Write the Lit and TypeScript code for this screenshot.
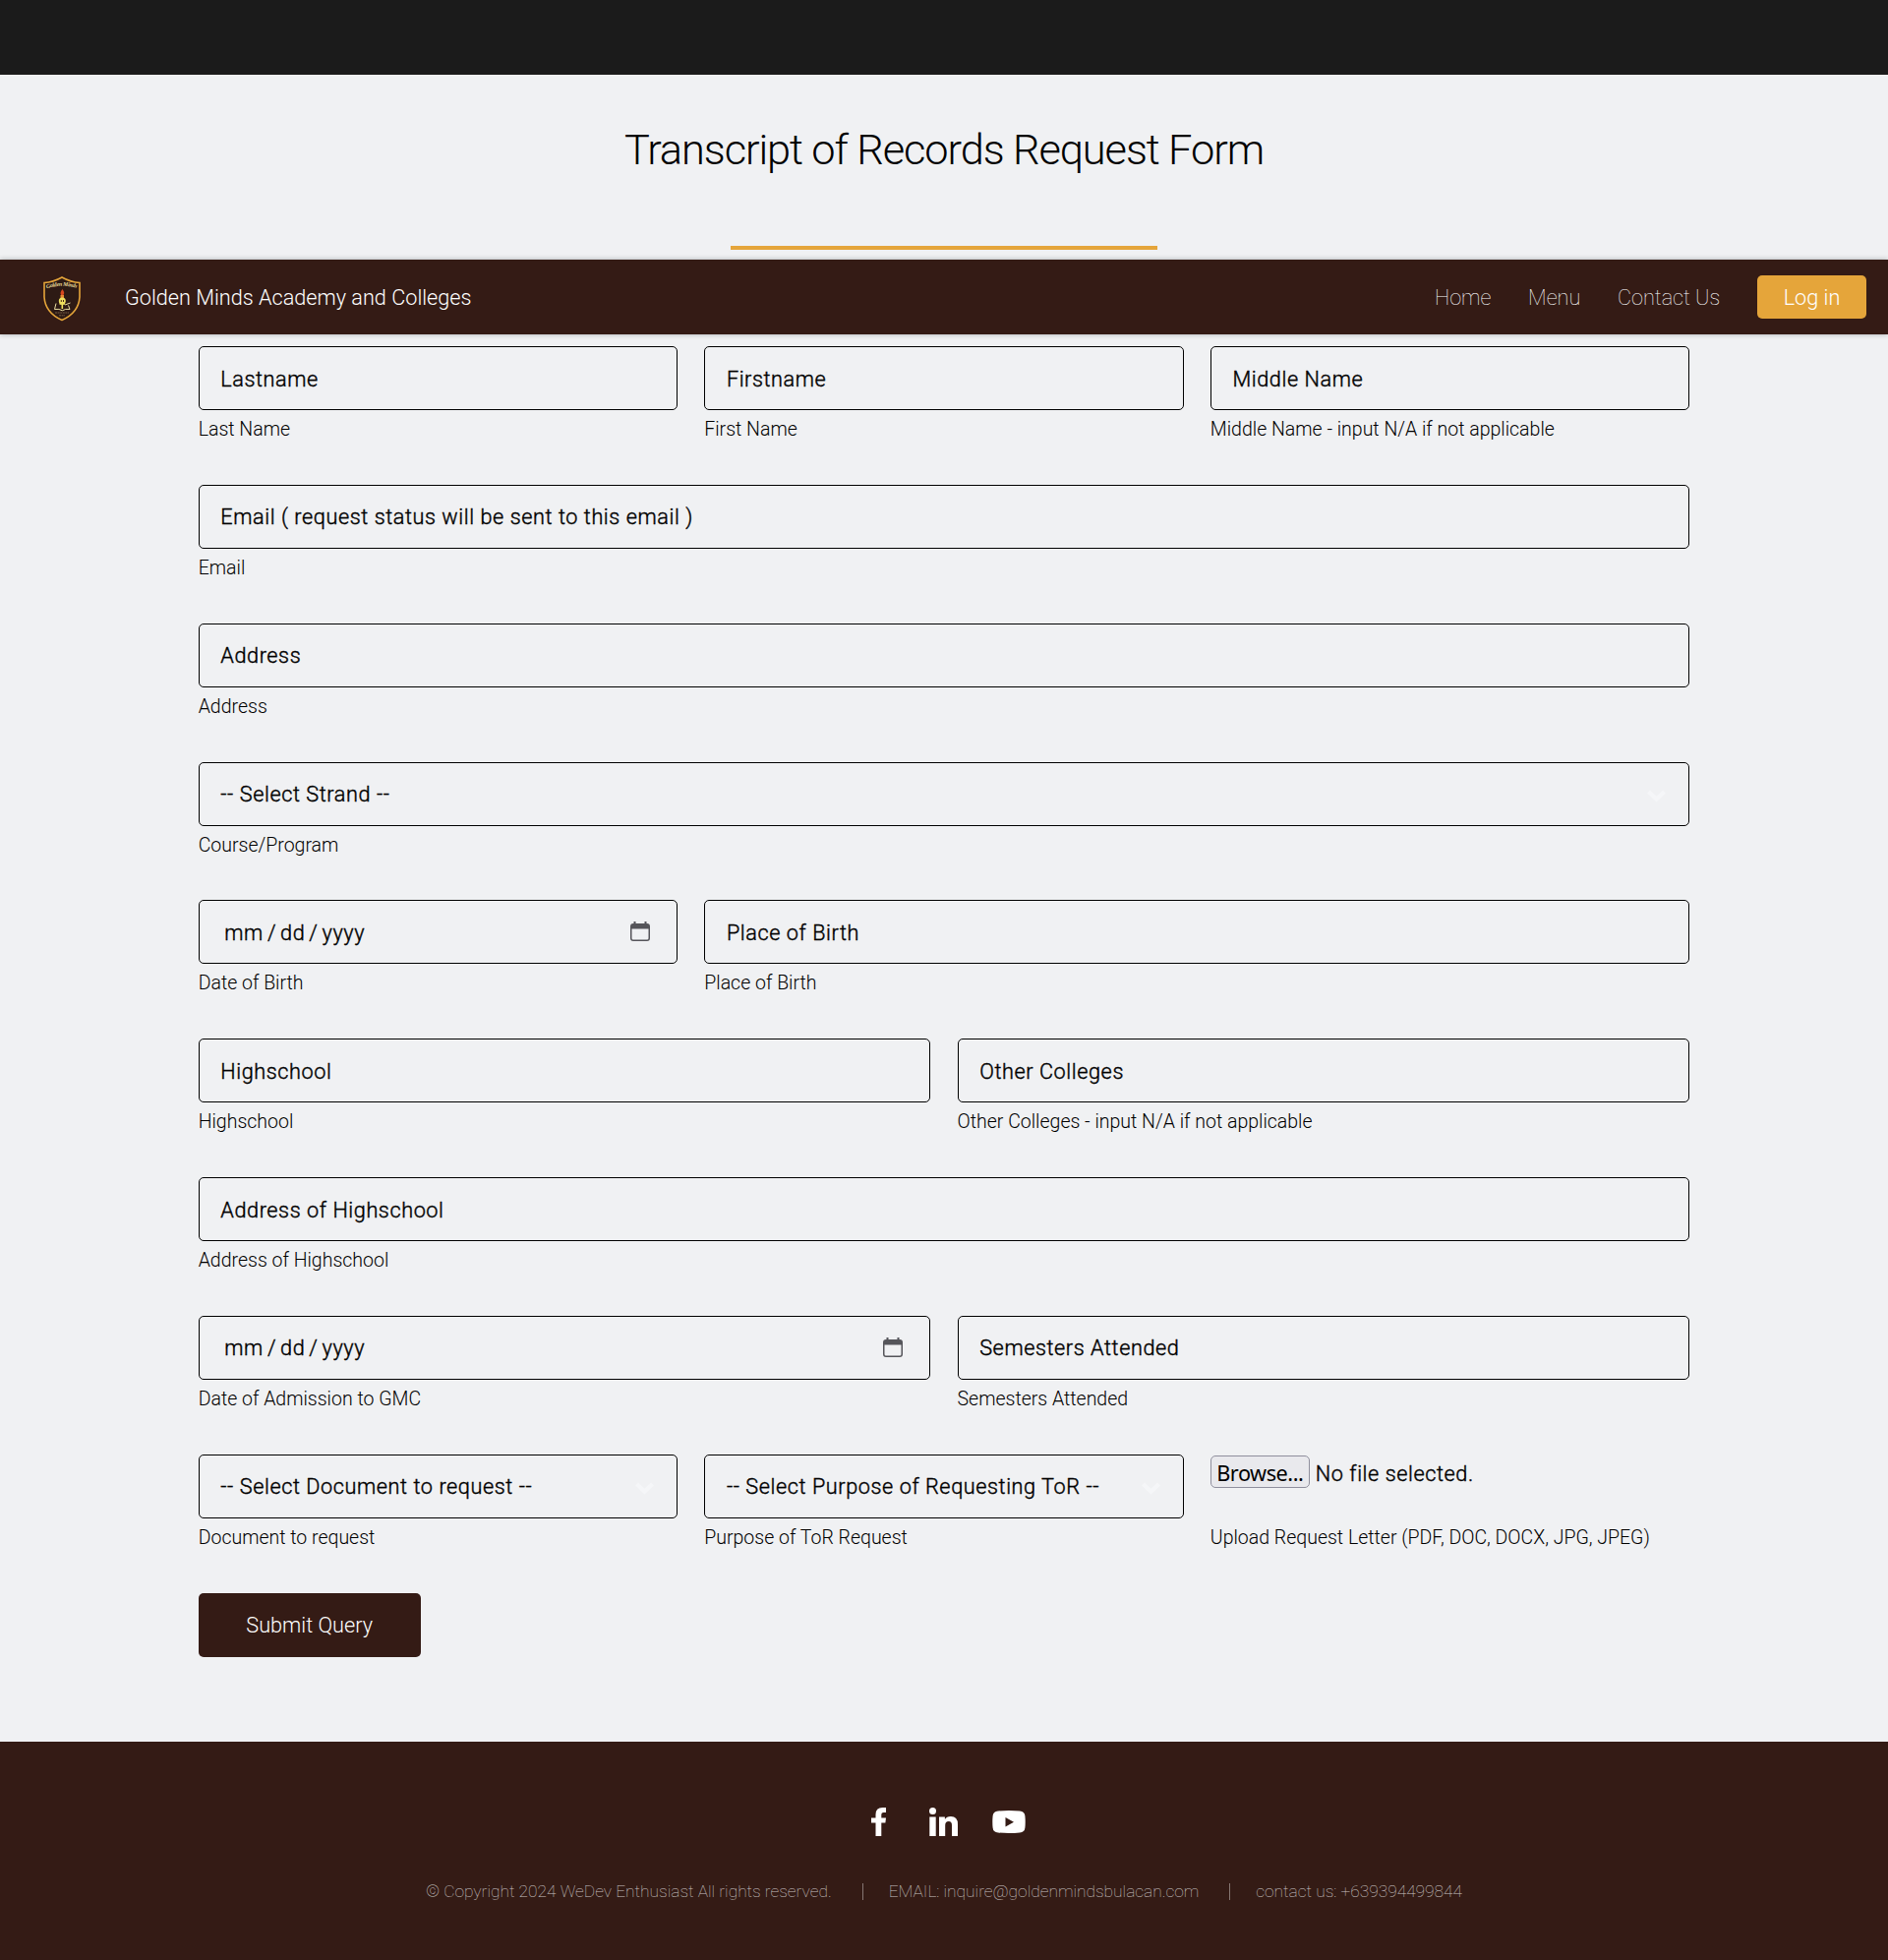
import { LitElement, html, css, svg } from "lit";
import { customElement } from "lit/decorators.js";

type Kind = "text" | "select" | "date" | "file";
interface Field { kind: Kind; text: string; label: string; span: number; }

const f = (span: number, text: string, label: string, kind: Kind = "text"): Field => ({ span, text, label, kind });

const rows: Field[][] = [
  [f(4, "Lastname", "Last Name"), f(4, "Firstname", "First Name"), f(4, "Middle Name", "Middle Name - input N/A if not applicable")],
  [f(12, "Email ( request status will be sent to this email )", "Email")],
  [f(12, "Address", "Address")],
  [f(12, "-- Select Strand --", "Course/Program", "select")],
  [f(4, "", "Date of Birth", "date"), f(8, "Place of Birth", "Place of Birth")],
  [f(6, "Highschool", "Highschool"), f(6, "Other Colleges", "Other Colleges - input N/A if not applicable")],
  [f(12, "Address of Highschool", "Address of Highschool")],
  [f(6, "", "Date of Admission to GMC", "date"), f(6, "Semesters Attended", "Semesters Attended")],
  [
    f(4, "-- Select Document to request --", "Document to request", "select"),
    f(4, "-- Select Purpose of Requesting ToR --", "Purpose of ToR Request", "select"),
    f(4, "No file selected.", "Upload Request Letter (PDF, DOC, DOCX, JPG, JPEG)", "file"),
  ],
];

const chevron = svg`<path d="M1.500 2 L9.500 9.500 L17.500 2" fill="none" stroke="#f5f6f8" stroke-width="4.200"/>`;

@customElement("app-root")
export class AppRoot extends LitElement {
  static styles = css`
    :host { display: block; font: 300 21.667px/1.75 Roboto, sans-serif; color: #000; background: #f0f1f3; }
    * { box-sizing: border-box; }
    .page { display: flex; flex-direction: column; height: 1993px; overflow: hidden; }
    .top { height: 76px; background: #1b1b1b; flex: none; }
    .intro { height: 188px; flex: none; display: flex; flex-direction: column; align-items: center; padding-top: 49px; }
    h2 { margin: 0; font-size: 43.333px; font-weight: 300; line-height: 56px; letter-spacing: -0.025em; white-space: nowrap; }
    .rule { width: 433.33px; height: 4px; background: #e5a53a; margin-top: 69px; }
    .bar { height: 76px; flex: none; display: flex; align-items: center; background: #341b15; color: #fff; position: relative; padding: 0 22px 0 44px; box-shadow: 0 0 5px rgba(0, 20, 20, 0.3); }
    .logo { width: 38px; height: 46px; display: block; margin-top: 3px; }
    .brand { margin-left: 45px; padding-top: 1px; }
    nav { margin-left: auto; display: flex; align-items: center; gap: 37.7px; font-weight: 100; }
    nav span { padding-top: 1px; }
    nav .login { width: 111px; height: 44px; border-radius: 5px; background: #e5a53a; font-weight: 300; display: flex; align-items: center; justify-content: center; }
    form { width: 1516.67px; margin: 12.1px auto 0; flex: none; display: flex; flex-direction: column; }
    .row { display: grid; grid-template-columns: repeat(12, minmax(0, 1fr)); column-gap: 27.083px; height: 140.833px; }
    .s4 { grid-column: span 4; }
    .s6 { grid-column: span 6; }
    .s8 { grid-column: span 8; }
    .s12 { grid-column: span 12; }
    .box, .nofile { letter-spacing: 0.58px; -webkit-text-stroke: 0.4px #000; }
    .box { height: 65px; border: 1px solid #000; border-radius: 5px; padding: 2px 21.667px 0; display: flex; align-items: center; white-space: pre; }
    .box svg { margin-left: auto; }
    .chev { width: 19px; height: 13px; margin-right: 1.500px; margin-top: 2px; }
    .date { display: flex; gap: 4px; margin-left: 4px; }
    .cal { width: 20px; height: 20px; margin-right: 6px; margin-top: -3px; }
    .file { height: 65px; display: flex; align-items: flex-start; padding-top: 1px; }
    .browse { font: 400 21.667px/33px "Noto Sans", sans-serif; letter-spacing: -0.45px; width: 101px; height: 33px; border: 1px solid #8f8f9d; border-radius: 5px; background: #e9e9ed; text-align: center; }
    .nofile { margin-left: 6px; line-height: 37px; }
    .label { font-size: 19.5px; line-height: 40px; white-space: nowrap; }
    .submit { width: 226px; height: 65px; border-radius: 5px; background: #341b15; color: #fff; display: flex; align-items: center; justify-content: center; padding-top: 1px; }
    footer { margin-top: auto; height: 222px; flex: none; background: #341b15; display: flex; flex-direction: column; align-items: center; padding-top: 67px; }
    .icons { display: flex; width: 157px; height: 29px; margin-left: 9px; }
    .icons svg { width: 157px; height: 29px; }
    .copy { display: flex; align-items: center; margin-top: 41px; font-size: 17.333px; line-height: 30px; font-weight: 100; color: rgba(255, 255, 255, 0.75); white-space: nowrap; }
    .item + .item { border-left: 1px solid rgba(255, 255, 255, 0.4); padding-left: 26px; margin-left: 31px; line-height: 17px; }
  `;

  private control(x: Field) {
    if (x.kind === "file") {
      return html`<div class="file"><span class="browse">Browse...</span><span class="nofile">${x.text}</span></div>`;
    }
    if (x.kind === "date") {
      return html`<div class="box"><div class="date"><span>mm</span><span>/</span><span>dd</span><span>/</span><span>yyyy</span></div><svg class="cal" viewBox="0 0 20 20"><path fill="#55555a" fill-rule="evenodd" d="M3.500 0h2v2h9V0h2v2H17a3 3 0 0 1 3 3v12a3 3 0 0 1-3 3H3a3 3 0 0 1-3-3V5a3 3 0 0 1 3-3h.5zM1.500 7.500V17q0 1.500 1.500 1.500h14q1.500 0 1.500-1.500V7.500z"/></svg></div>`;
    }
    return html`<div class="box"><span>${x.text}</span>${x.kind === "select"
      ? html`<svg class="chev" viewBox="0 0 19 13">${chevron}</svg>` : null}</div>`;
  }

  render() {
    return html`<div class="page">
      <div class="top"></div>
      <div class="intro"><h2>Transcript of Records Request Form</h2><div class="rule"></div></div>
      <header class="bar">
        <svg class="logo" viewBox="0 0 38 46">
          <path d="M19 1 Q28 6 37 6.500 V21 Q36 37 19 44.500 Q2 37 1 21 V6.500 Q10 6 19 1Z" fill="#2d1a14" stroke="#e5a53a" stroke-width="1.600"/>
          <path id="arc" d="M3.500 12.500 Q19 7 35.500 12.500" fill="none"/>
          <text font-family="Liberation Serif, serif" font-size="5.800" font-style="italic" font-weight="700" fill="#e9dc9a"><textPath href="#arc" textLength="31">Golden Minds</textPath></text>
          <path d="M19.500 13q3 4 .8 6h-2.200q-1.600-2.500 1.400-6z" fill="#d8481f"/>
          <path d="M17.500 19h3.500v3h-3.500z" fill="#e58b32"/>
          <circle cx="19.300" cy="25" r="3.500" fill="#efe05e"/>
          <path d="M16.500 28h5.500M19.300 28v5" stroke="#efe05e" stroke-width="1.600"/>
          <path d="M18.300 24v2M20.500 24v2" stroke="#4a2a16" stroke-width="1"/>
          <path d="M13 27.500l-1.500 6q5-.8 7.800 1.300 3-2.100 7.700-1.300l-1.500-4M22 29l5.500-2" fill="none" stroke="#e8dba0" stroke-width="1"/>
          <path d="M12 37h14M16 39.800h6" stroke="#806548" stroke-width=".9" stroke-dasharray="2 .6"/>
        </svg>
        <span class="brand">Golden Minds Academy and Colleges</span>
        <nav><span>Home</span><span>Menu</span><span>Contact Us</span><span class="login">Log in</span></nav>
      </header>
      <form>
        ${rows.map((r) => html`<div class="row">${r.map((x) => html`<div class="s${x.span}">${this.control(x)}<div class="label">${x.label}</div></div>`)}</div>`)}
        <div class="submit">Submit Query</div>
      </form>
      <footer>
        <div class="icons"><svg viewBox="0 0 157 29" fill="#fff">
          <path d="M15 0v5h-2.500q-2.200 0-2.200 2v3.500H15l-.6 5h-4.100V29H4.500V15.500H0v-5h4.500V7q0-7 7-7z"/>
          <circle cx="62.500" cy="3.500" r="3.500"/><path d="M59.300 9.500h6.400V29h-6.400zM69 9.500h5.900V12q1.700-3 6-3 7.100 0 7.100 8v12h-6V18q0-4-3.200-4-3.600 0-3.600 4v11H69z"/>
          <path fill-rule="evenodd" d="M129 3.500Q140 2.500 151 3.500q5 .5 5.400 5 .6 6 0 12-.4 4.500-5.400 5-11 1-22 0-5-.5-5.400-5-.6-6 0-12 .4-4.500 5.400-5zM136.500 10v9.500l8.500-4.700z"/>
        </svg></div>
        <div class="copy"><span class="item">© Copyright 2024 WeDev Enthusiast All rights reserved.</span><span class="item">EMAIL: inquire@goldenmindsbulacan.com</span><span class="item">contact us: +639394499844</span></div>
      </footer>
    </div>`;
  }
}
